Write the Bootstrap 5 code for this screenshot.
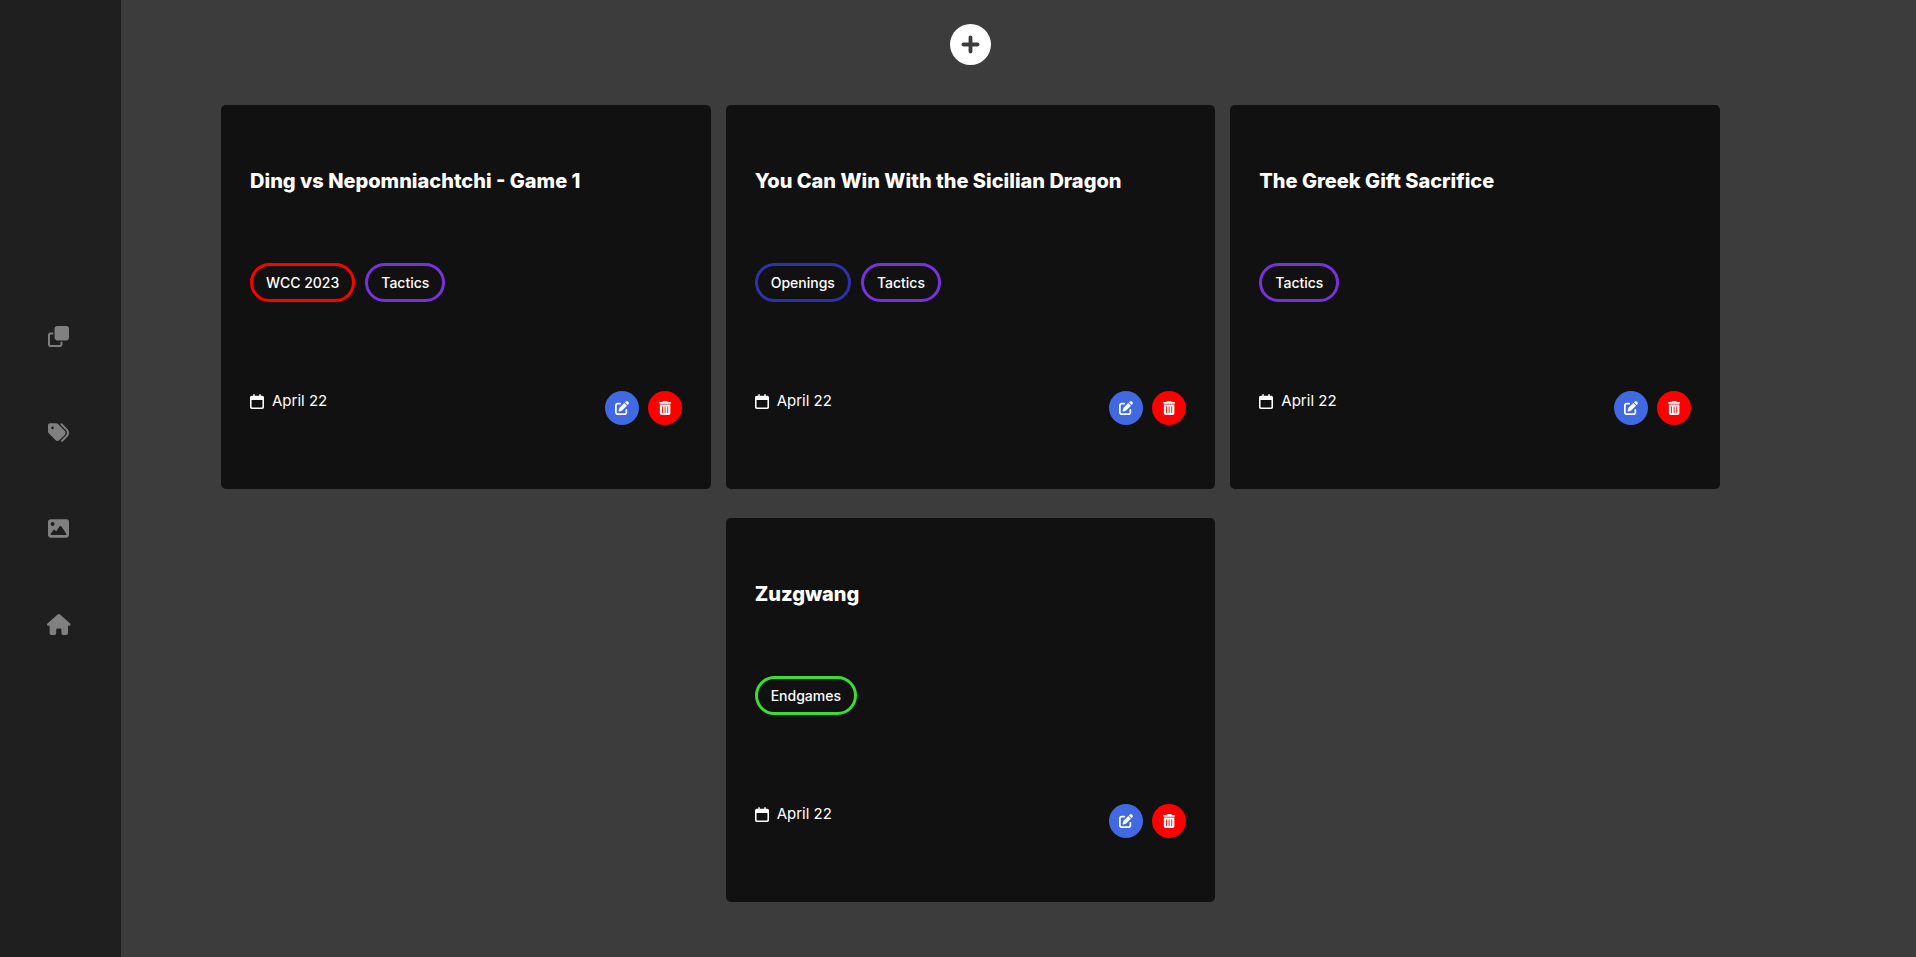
<!DOCTYPE html>
<html lang="en">
<head>
<meta charset="utf-8">
<meta name="viewport" content="width=device-width, initial-scale=1">
<title>Chess notes</title>
<link href="https://cdn.jsdelivr.net/npm/bootstrap@5.3.0/dist/css/bootstrap.min.css" rel="stylesheet">
<style>
  body { background: #3c3c3c; color: #fff; font-family: Inter, "Liberation Sans", sans-serif; }
  .icon { display: block; fill: currentColor; height: 1em; width: auto; overflow: visible; }

  .sidebar { width: 121px; padding: 3px 4px 0 0; gap: 75px; background: #1f1f1f; }
  .sidebar a { color: #808080; font-size: 21px; line-height: 1; }
  .sidebar a:hover { color: #fff; }

  .board { padding: 24px 196px 24px 100px; }
  .add-row { margin-bottom: 40px; }
  .add-btn { font-size: 41px; color: #fff; }
  .card-row { --bs-gutter-x: 15px; --bs-gutter-y: 29px; }

  .note { background: #111; color: #fff; border: 0; border-radius: 5px; padding: 64px 29px; }
  .note-title { font-size: 20px; line-height: 24px; font-weight: 800; margin-bottom: 70px; }
  .tags { gap: 10px; margin-bottom: 89px; }
  .tag { border: 3px solid; border-radius: 20px; padding: 6px 13px; font-size: 14px; line-height: 21px; font-weight: 500; }
  .tag span { color: #fff; }
  .tag-wcc { border-color: #f00; }
  .tag-tactics { border-color: #7832dc; }
  .tag-openings { border-color: #2d32aa; }
  .tag-endgames { border-color: #3cdc32; }
  .note-date { gap: 8px; font-size: 15px; line-height: 20px; }
  .actions { gap: 9px; }
  .round-btn { width: 34px; height: 34px; font-size: 14px; color: #fff; }
  .edit-btn { background: #4169e1; }
  .delete-btn { background: #f00; }

  @media (max-width: 1199px) { .board { padding-left: 24px; padding-right: 24px; } }
</style>
</head>
<body>
<svg class="d-none" aria-hidden="true">
  <symbol id="i-clone" viewBox="0 0 512 512"><path d="M224 0H448c35.300 0 64 28.700 64 64V288c0 35.300-28.700 64-64 64H224c-35.300 0-64-28.700-64-64V64c0-35.300 28.700-64 64-64zM64 160H128v48H64c-8.800 0-16 7.200-16 16V448c0 8.800 7.200 16 16 16H288c8.800 0 16-7.200 16-16V384h48v64c0 35.300-28.700 64-64 64H64c-35.300 0-64-28.700-64-64V224c0-35.300 28.700-64 64-64z"/></symbol>
  <symbol id="i-tags" viewBox="0 0 512 512"><path d="M345 39.100L472.800 168.400c52.400 53 52.400 138.200 0 191.200L360.800 472.900c-9.300 9.400-24.500 9.500-33.900 .2s-9.500-24.500-.2-33.900L438.600 325.900c33.900-34.300 33.900-89.400 0-123.700L310.900 72.900c-9.300-9.400-9.200-24.600 .2-33.900s24.600-9.200 33.900 .2zM0 229.500V80C0 53.500 21.500 32 48 32H197.500c17 0 33.300 6.700 45.300 18.700l168 168c25 25 25 65.500 0 90.500L277.300 442.700c-25 25-65.500 25-90.500 0l-168-168C6.700 262.700 0 246.500 0 229.500zM144 144a32 32 0 1 0 -64 0 32 32 0 1 0 64 0z"/></symbol>
  <symbol id="i-image" viewBox="0 0 512 512"><path d="M0 96C0 60.700 28.700 32 64 32H448c35.300 0 64 28.700 64 64V416c0 35.300-28.700 64-64 64H64c-35.300 0-64-28.700-64-64V96zM323.800 202.500c-4.500-6.600-11.900-10.500-19.800-10.500s-15.400 3.900-19.800 10.500l-87 127.600L170.700 297c-4.600-5.700-11.500-9-18.700-9s-14.200 3.300-18.700 9l-64 80c-5.800 7.200-6.900 17.100-2.900 25.400s12.400 13.600 21.600 13.600h96 32H424c8.900 0 17.100-4.900 21.200-12.800s3.600-17.400-1.400-24.700l-120-176zM112 192a48 48 0 1 0 0-96 48 48 0 1 0 0 96z"/></symbol>
  <symbol id="i-house" viewBox="0 0 576 512"><path d="M575.800 255.500c0 18-15 32.100-32 32.100h-32l.7 160.200c0 2.700-.2 5.400-.5 8.100V472c0 22.100-17.900 40-40 40H456c-1.100 0-2.200 0-3.300-.1c-1.400 .1-2.800 .1-4.200 .1H416 392c-22.100 0-40-17.900-40-40V448 384c0-17.700-14.300-32-32-32H256c-17.700 0-32 14.300-32 32v64 24c0 22.100-17.900 40-40 40H160 128.100c-1.500 0-3-.1-4.500-.2c-1.200 .1-2.400 .2-3.600 .2H104c-22.100 0-40-17.900-40-40V360c0-.9 0-1.900 .1-2.800V287.600H32c-18 0-32-14-32-32.100c0-9 3-17 10-24L266.400 8c7-7 15-8 22-8s15 2 21 7L564.800 231.500c8 7 12 15 11 24z"/></symbol>
  <symbol id="i-calendar" viewBox="0 0 448 480"><path d="M152 24c0-13.300-10.700-24-24-24s-24 10.700-24 24V56H56C25 56 0 81 0 112V424c0 31 25 56 56 56H392c31 0 56-25 56-56V112c0-31-25-56-56-56H344V24c0-13.300-10.700-24-24-24s-24 10.700-24 24V56H152V24zM50 192H398V416c0 8.800-7.200 16-16 16H66c-8.800 0-16-7.200-16-16V192z"/></symbol>
  <symbol id="i-edit" viewBox="0 0 512 512"><path d="M471.600 21.700c-21.900-21.900-57.300-21.900-79.200 0L362.300 51.700l97.900 97.900 30.100-30.100c21.900-21.900 21.900-57.300 0-79.200L471.600 21.700zm-299.200 220c-6.100 6.100-10.800 13.600-13.500 21.900l-29.600 88.800c-2.900 8.600-.6 18.100 5.800 24.600s15.900 8.700 24.600 5.800l88.800-29.600c8.200-2.700 15.700-7.400 21.900-13.500L437.700 172.300 339.700 74.300 172.400 241.700zM96 64C43 64 0 107 0 160V416c0 53 43 96 96 96H352c53 0 96-43 96-96V320c0-17.700-14.300-32-32-32s-32 14.300-32 32v96c0 17.700-14.300 32-32 32H96c-17.700 0-32-14.300-32-32V160c0-17.700 14.300-32 32-32h96c17.700 0 32-14.300 32-32s-14.300-32-32-32H96z"/></symbol>
  <symbol id="i-trash" viewBox="0 0 448 512"><path d="M135.200 17.700C140.600 6.800 151.700 0 163.800 0H284.200c12.100 0 23.200 6.800 28.600 17.700L320 32h96c17.700 0 32 14.300 32 32s-14.300 32-32 32H32C14.300 96 0 81.700 0 64S14.300 32 32 32h96l7.200-14.300zM32 128H416V448c0 35.300-28.700 64-64 64H96c-35.300 0-64-28.700-64-64V128zm96 64c-8.800 0-16 7.200-16 16V432c0 8.800 7.200 16 16 16s16-7.200 16-16V208c0-8.800-7.200-16-16-16zm96 0c-8.800 0-16 7.200-16 16V432c0 8.800 7.200 16 16 16s16-7.200 16-16V208c0-8.800-7.200-16-16-16zm96 0c-8.800 0-16 7.200-16 16V432c0 8.800 7.200 16 16 16s16-7.200 16-16V208c0-8.800-7.200-16-16-16z"/></symbol>
</svg>

<div class="d-flex min-vh-100">
  <nav class="sidebar d-flex flex-column align-items-center justify-content-center flex-shrink-0" aria-label="Main">
    <a href="#" aria-label="Notes"><svg class="icon" viewBox="0 0 512 512"><use href="#i-clone"/></svg></a>
    <a href="#" aria-label="Tags"><svg class="icon" viewBox="0 0 512 512"><use href="#i-tags"/></svg></a>
    <a href="#" aria-label="Images"><svg class="icon" viewBox="0 0 512 512"><use href="#i-image"/></svg></a>
    <a href="#" aria-label="Home"><svg class="icon" viewBox="0 0 576 512"><use href="#i-house"/></svg></a>
  </nav>

  <main class="board flex-grow-1">
    <div class="add-row d-flex justify-content-center">
      <button type="button" class="add-btn btn p-0 border-0 lh-1 rounded-circle" aria-label="Add note">
        <svg class="icon" viewBox="0 0 512 512"><path d="M256 512A256 256 0 1 0 256 0a256 256 0 1 0 0 512zM232 344V280H168c-13.300 0-24-10.700-24-24s10.700-24 24-24h64V168c0-13.300 10.700-24 24-24s24 10.700 24 24v64h64c13.300 0 24 10.700 24 24s-10.700 24-24 24H280v64c0 13.300-10.700 24-24 24s-24-10.700-24-24z"/></svg>
      </button>
    </div>

    <div class="row card-row justify-content-center mt-0 row-gap-0" id="notes">
      <div class="col-12 col-lg-4 mt-0">
        <article class="card note">
          <h2 class="note-title">Ding vs Nepomniachtchi - Game 1</h2>
          <div class="tags d-flex flex-wrap"><div class="tag tag-wcc"><span>WCC 2023</span></div><div class="tag tag-tactics"><span>Tactics</span></div></div>
          <div class="d-flex justify-content-between align-items-start">
            <div class="note-date d-flex align-items-center"><svg class="icon" viewBox="0 0 448 480"><use href="#i-calendar"/></svg><span>April 22</span></div>
            <div class="actions d-flex">
              <button type="button" class="btn round-btn edit-btn rounded-circle border-0 p-0 d-flex align-items-center justify-content-center" aria-label="Edit"><svg class="icon" viewBox="0 0 512 512"><use href="#i-edit"/></svg></button>
              <button type="button" class="btn round-btn delete-btn rounded-circle border-0 p-0 d-flex align-items-center justify-content-center" aria-label="Delete"><svg class="icon" viewBox="0 0 448 512"><use href="#i-trash"/></svg></button>
            </div>
          </div>
        </article>
      </div>
      <div class="col-12 col-lg-4 mt-0">
        <article class="card note">
          <h2 class="note-title">You Can Win With the Sicilian Dragon</h2>
          <div class="tags d-flex flex-wrap"><div class="tag tag-openings"><span>Openings</span></div><div class="tag tag-tactics"><span>Tactics</span></div></div>
          <div class="d-flex justify-content-between align-items-start">
            <div class="note-date d-flex align-items-center"><svg class="icon" viewBox="0 0 448 480"><use href="#i-calendar"/></svg><span>April 22</span></div>
            <div class="actions d-flex">
              <button type="button" class="btn round-btn edit-btn rounded-circle border-0 p-0 d-flex align-items-center justify-content-center" aria-label="Edit"><svg class="icon" viewBox="0 0 512 512"><use href="#i-edit"/></svg></button>
              <button type="button" class="btn round-btn delete-btn rounded-circle border-0 p-0 d-flex align-items-center justify-content-center" aria-label="Delete"><svg class="icon" viewBox="0 0 448 512"><use href="#i-trash"/></svg></button>
            </div>
          </div>
        </article>
      </div>
      <div class="col-12 col-lg-4 mt-0">
        <article class="card note">
          <h2 class="note-title">The Greek Gift Sacrifice</h2>
          <div class="tags d-flex flex-wrap"><div class="tag tag-tactics"><span>Tactics</span></div></div>
          <div class="d-flex justify-content-between align-items-start">
            <div class="note-date d-flex align-items-center"><svg class="icon" viewBox="0 0 448 480"><use href="#i-calendar"/></svg><span>April 22</span></div>
            <div class="actions d-flex">
              <button type="button" class="btn round-btn edit-btn rounded-circle border-0 p-0 d-flex align-items-center justify-content-center" aria-label="Edit"><svg class="icon" viewBox="0 0 512 512"><use href="#i-edit"/></svg></button>
              <button type="button" class="btn round-btn delete-btn rounded-circle border-0 p-0 d-flex align-items-center justify-content-center" aria-label="Delete"><svg class="icon" viewBox="0 0 448 512"><use href="#i-trash"/></svg></button>
            </div>
          </div>
        </article>
      </div>
      <div class="col-12 col-lg-4">
        <article class="card note">
          <h2 class="note-title">Zuzgwang</h2>
          <div class="tags d-flex flex-wrap"><div class="tag tag-endgames"><span>Endgames</span></div></div>
          <div class="d-flex justify-content-between align-items-start">
            <div class="note-date d-flex align-items-center"><svg class="icon" viewBox="0 0 448 480"><use href="#i-calendar"/></svg><span>April 22</span></div>
            <div class="actions d-flex">
              <button type="button" class="btn round-btn edit-btn rounded-circle border-0 p-0 d-flex align-items-center justify-content-center" aria-label="Edit"><svg class="icon" viewBox="0 0 512 512"><use href="#i-edit"/></svg></button>
              <button type="button" class="btn round-btn delete-btn rounded-circle border-0 p-0 d-flex align-items-center justify-content-center" aria-label="Delete"><svg class="icon" viewBox="0 0 448 512"><use href="#i-trash"/></svg></button>
            </div>
          </div>
        </article>
      </div>
    </div>
  </main>
</div>
<script src="https://cdn.jsdelivr.net/npm/bootstrap@5.3.0/dist/js/bootstrap.bundle.min.js"></script>
</body>
</html>
